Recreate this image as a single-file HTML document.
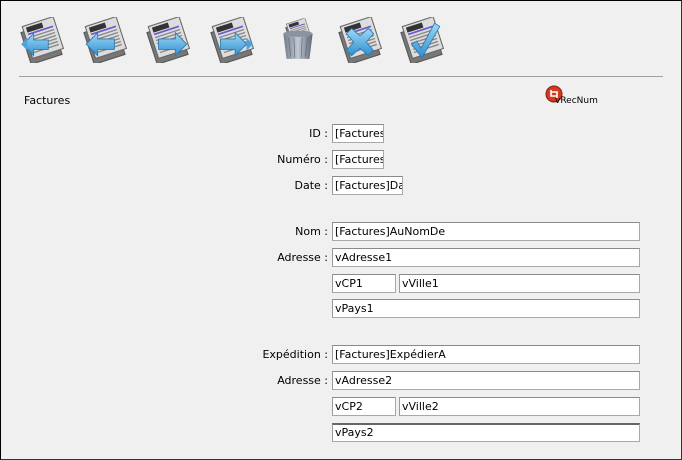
<!DOCTYPE html>
<html><head><meta charset="utf-8"><style>
*{margin:0;padding:0;box-sizing:border-box}
body{width:682px;height:460px;background:#f0f0f0;font-family:"DejaVu Sans","Liberation Sans",sans-serif;font-size:11px;color:#000;position:relative;overflow:hidden}
.frame{position:absolute;left:0;top:0;width:682px;height:460px;border:1px solid #000;border-right-color:#333;border-bottom-color:#333}
.ic{position:absolute;top:17px;width:46px;height:46px}
.hr{position:absolute;left:19px;top:76px;width:644px;height:1px;background:#a0a0a0}
.lbl{position:absolute;text-align:right;width:200px;left:128px;line-height:19px;font-size:11px}
.f{position:absolute;height:19px;background:#fff;border:1px solid #a8a8a8;border-top-color:#8a8a8a;border-left-color:#9a9a9a;padding-left:2px;line-height:17px;white-space:nowrap;overflow:hidden;font-size:11px}
.f.dk{border-top:2px solid #666;line-height:16px}
</style></head><body>
<svg width="0" height="0" style="position:absolute">
<defs>
<linearGradient id="bl" x1="0" y1="0" x2="0" y2="1"><stop offset="0" stop-color="#9fd8f5"/><stop offset="1" stop-color="#2f8fd0"/></linearGradient>
<linearGradient id="can" x1="0" y1="0" x2="1" y2="0"><stop offset="0" stop-color="#6f7a88"/><stop offset=".5" stop-color="#c0c8d4"/><stop offset="1" stop-color="#5d6774"/></linearGradient>
<symbol id="doc" viewBox="0 0 44 44">
<g transform="rotate(-18 22 22)">
<rect x="5" y="9" width="31" height="32" fill="#777" stroke="#555"/>
<rect x="8" y="4" width="31" height="32" fill="#ddd" stroke="#666"/>
<rect x="11" y="6" width="16" height="5" fill="#333"/>
<rect x="11" y="12" width="25" height="1.6" fill="#6a5acd"/>
<path d="M11 16h25M11 19h25M11 22h25M11 25h25M11 28h25M11 31h25" stroke="#888" stroke-width="1.3"/>
</g>
</symbol>
</defs></svg>
<div class="frame"></div>
<svg class="ic" style="left:19px" viewBox="0 0 44 44"><use href="#doc"/><path d="M4 26l10-10v6h14v9H14v6z" fill="url(#bl)" stroke="#2a78b0" stroke-width=".8"/><path d="M2 26l6-6v12z" fill="#4aa3dd"/></svg>
<svg class="ic" style="left:82px" viewBox="0 0 44 44"><use href="#doc"/><path d="M4 26l11-11v6h16v10H15v6z" fill="url(#bl)" stroke="#2a78b0" stroke-width=".8"/></svg>
<svg class="ic" style="left:145px" viewBox="0 0 44 44"><use href="#doc"/><path d="M40 26L29 15v6H13v10h16v6z" fill="url(#bl)" stroke="#2a78b0" stroke-width=".8"/></svg>
<svg class="ic" style="left:209px" viewBox="0 0 44 44"><use href="#doc"/><path d="M36 26L25 15v6H11v10h14v6z" fill="url(#bl)" stroke="#2a78b0" stroke-width=".8"/><path d="M42 26l-6-6v12z" fill="#4aa3dd"/></svg>
<svg class="ic" style="left:275px" viewBox="0 0 44 44"><g transform="scale(.6) translate(15 2)"><use href="#doc" width="44" height="44"/></g><path d="M8 16h28l-3 24H11z" fill="url(#can)"/><ellipse cx="22" cy="16" rx="14" ry="3" fill="#8a94a0"/><path d="M13 20l2 18M18 20l1 19M26 20l-1 19M31 20l-2 18" stroke="#5d6774" stroke-width=".6"/></svg>
<svg class="ic" style="left:337px" viewBox="0 0 44 44"><use href="#doc"/><path d="M9 16l5-5 8 7 8-7 5 5-7 8 7 8-5 5-8-7-8 7-5-5 7-8z" fill="url(#bl)" stroke="#2a78b0" stroke-width=".8"/></svg>
<svg class="ic" style="left:399px" viewBox="0 0 44 44"><use href="#doc"/><path d="M12 26l5-3 4 7 13-24 5 3-17 30z" fill="url(#bl)" stroke="#2a78b0" stroke-width=".8"/></svg>
<div class="hr"></div>
<div style="position:absolute;left:24px;top:94px">Factures</div>
<svg style="position:absolute;left:545px;top:85px" width="18" height="18" viewBox="0 0 18 18"><circle cx="9" cy="9" r="8" fill="#d33a22" stroke="#8a1a0a"/><path d="M6 5v6h6M12 13V7H6" stroke="#fff" stroke-width="1.6" fill="none"/></svg>
<div style="position:absolute;left:555px;top:96px;font-size:9px">vRecNum</div>

<div class="lbl" style="top:124px">ID :</div><div class="f" style="left:332px;top:124px;width:52px">[Factures</div>
<div class="lbl" style="top:150px">Numéro :</div><div class="f" style="left:332px;top:150px;width:52px">[Factures</div>
<div class="lbl" style="top:176px">Date :</div><div class="f" style="left:332px;top:176px;width:71px">[Factures]Date</div>

<div class="lbl" style="top:222px">Nom :</div><div class="f" style="left:332px;top:222px;width:308px">[Factures]AuNomDe</div>
<div class="lbl" style="top:248px">Adresse :</div><div class="f" style="left:332px;top:248px;width:308px">vAdresse1</div>
<div class="f" style="left:332px;top:274px;width:64px">vCP1</div><div class="f" style="left:399px;top:274px;width:241px">vVille1</div>
<div class="f" style="left:332px;top:299px;width:308px">vPays1</div>

<div class="lbl" style="top:345px">Expédition :</div><div class="f" style="left:332px;top:345px;width:308px">[Factures]ExpédierA</div>
<div class="lbl" style="top:371px">Adresse :</div><div class="f" style="left:332px;top:371px;width:308px">vAdresse2</div>
<div class="f" style="left:332px;top:397px;width:64px">vCP2</div><div class="f" style="left:399px;top:397px;width:241px">vVille2</div>
<div class="f dk" style="left:332px;top:423px;width:308px">vPays2</div>
</body></html>
